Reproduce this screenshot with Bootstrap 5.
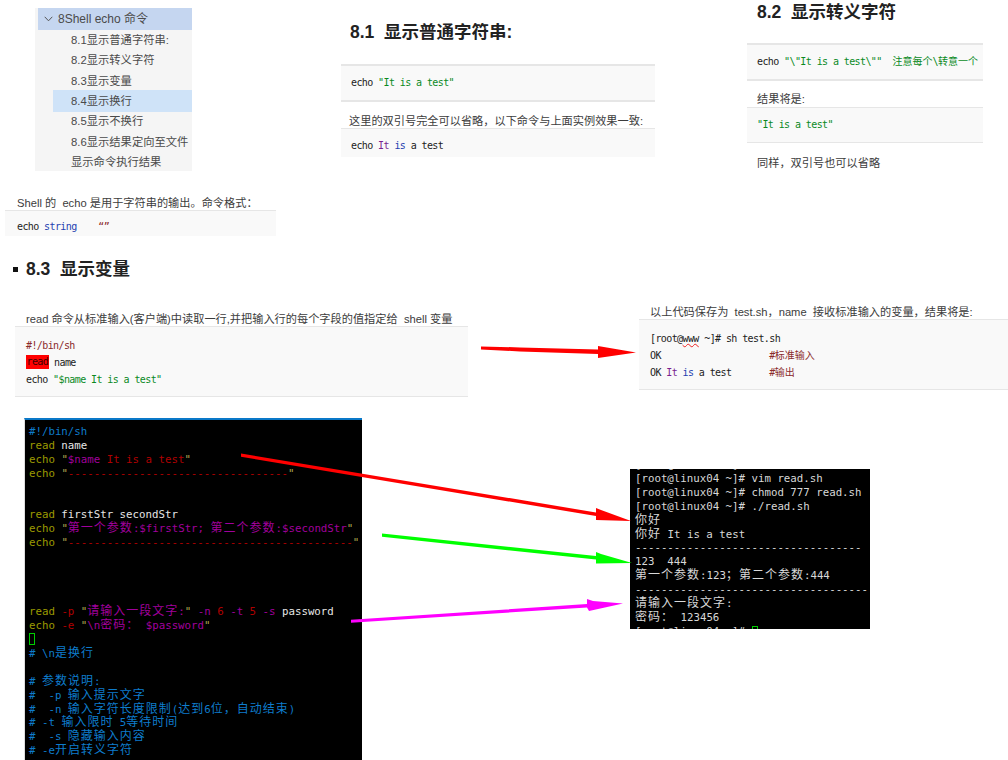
<!DOCTYPE html>
<html lang="zh-CN">
<head>
<meta charset="utf-8">
<title>Shell echo 命令</title>
<link rel="stylesheet" href="https://cdn.jsdelivr.net/npm/bootstrap@5.3.0/dist/css/bootstrap.min.css">
<style>
html,body{margin:0;background:#fff;}
.sheet{position:relative;width:1008px;height:760px;overflow:hidden;font-family:"Liberation Sans","Noto Sans CJK SC",sans-serif;color:#333;}
.scrap{position:absolute;}
.overlay{position:absolute;left:0;top:0;width:1008px;height:760px;pointer-events:none;}

/* placement of each pasted fragment on the canvas */
.at-tree{left:35px;top:8px;width:157px;height:163px;}
.at-intro{left:5px;top:194px;width:271px;}
.at-s81{left:341px;top:20px;width:314px;}
.at-s82{left:747px;top:0;width:236px;}
.at-s83{left:13px;top:257px;}
.at-read{left:15px;top:311px;width:453px;}
.at-result{left:639px;top:304px;width:369px;}
.at-vim{left:24px;top:418px;width:338px;height:342px;}
.at-term{left:630px;top:469px;width:240px;height:160px;}

/* tree */
.tree{background:#f5f5f5;font-size:11.3px;color:#4a4a4a;line-height:20.4px;}
.tree-head{margin-left:3px;height:22px;background:#c5d6f0;padding-left:6px;gap:5px;font-size:12px;line-height:23px;}
.tree-item{height:20.4px;padding-left:36px;white-space:nowrap;}
.tree-item.is-on{background:#cfe3f8;margin-left:18px;padding-left:18px;height:22px;line-height:22px;margin-top:-1px;margin-bottom:-1px;}

/* article */
.para{font-size:11.2px;line-height:16px;margin:0;color:#3c3c3c;white-space:nowrap;}
.title{font-size:17.5px;line-height:24px;font-weight:700;color:#222;margin:0;white-space:nowrap;}
.codebox{font-family:"DejaVu Sans Mono","Noto Sans CJK SC",monospace;font-size:10px;letter-spacing:-.6px;background:#f9f9f9;border-top:1px solid #e6e6e6;border-bottom:1px solid #e6e6e6;color:#222;margin:0;white-space:pre;overflow:hidden;}
.zc{font-family:"Noto Sans CJK SC",sans-serif;letter-spacing:0;line-height:0;}
.box-thick{border-top-width:2px;border-bottom-width:2px;}
.box-open{border-bottom:0;}
.c-green{color:#0a8a1e;}
.c-blue{color:#1f3fb0;}
.c-purple{color:#7a1f8f;}
.c-brown{color:#8a2a2a;}
.hl-red{background:#f00;color:#3a0000;display:inline-block;height:14px;line-height:14px;padding:0 .5px;vertical-align:top;margin-top:1px;}
.squig{text-decoration:underline wavy #e22;text-decoration-thickness:1px;}
.bullet-sq{width:5px;height:5px;background:#111;}

/* terminals */
.vim,.term{background:#000;font-family:"DejaVu Sans Mono","Noto Sans CJK SC",monospace;font-size:10.75px;line-height:13.88px;white-space:pre;overflow:hidden;margin:0;}
.vim{border-top:2px solid #0a78c8;border-left:1px solid #ddd;padding:5px 0 0 4px;color:#e6e6e6;}
.term{color:#d8d8d8;padding:3px 0 0 5px;}
.term-cut{display:block;margin-top:-13.88px;}
.zh{font-family:"Noto Sans CJK SC",sans-serif;font-size:12px;letter-spacing:1px;line-height:0;}
.v-c{color:#0e7ccc;}
.v-k{color:#9c9a00;}
.v-s{color:#a0009c;}
.v-r{color:#b00000;}
.v-q{color:#b0a850;}
.v-cursor{display:inline-block;width:6px;height:12px;border:1px solid #0c0;vertical-align:-2px;}
.t-cursor{display:inline-block;width:6px;height:11px;border:1px solid #0c0;vertical-align:-2px;}

/* spacing inside fragments */
.intro-p{padding-left:12px;padding-top:1px;margin-bottom:-1px;}
.intro-code{height:26px;padding:9px 0 0 12px;line-height:14px;}
.s81-title{padding-left:9px;}
.s81-a{margin-top:20px;height:38px;padding:10px 10px 0;line-height:14px;}
.s81-p{margin-top:11px;margin-bottom:-1px;padding-left:8px;}
.s81-b{height:29px;padding:10px 10px 0;line-height:14px;}
.s82-title{padding-left:10px;}
.s82-a{margin-top:19px;height:38px;padding:10px 10px 0;line-height:14px;}
.s82-p{margin-top:10px;padding-left:10px;}
.s82-b{height:36px;padding:10px 10px 0;line-height:14px;}
.s82-q{margin-top:12px;padding-left:10px;}
.s83-row{gap:8px;}
.read-p,.result-p{padding-left:11px;margin-bottom:-1px;}
.read-code,.result-code{height:71px;padding:10px 11px 0;line-height:17px;}
</style>
</head>
<body>
<div class="sheet">

  <div class="scrap at-tree tree">
    <div class="tree-head d-flex align-items-center">
      <svg width="9" height="6" viewBox="0 0 9 6"><path d="M.7.8 4.5 4.8 8.3.8" fill="none" stroke="#555" stroke-width="1"/></svg>
      <span>8Shell echo 命令</span>
    </div>
    <div class="tree-item">8.1显示普通字符串:</div>
    <div class="tree-item">8.2显示转义字符</div>
    <div class="tree-item">8.3显示变量</div>
    <div class="tree-item is-on">8.4显示换行</div>
    <div class="tree-item">8.5显示不换行</div>
    <div class="tree-item">8.6显示结果定向至文件</div>
    <div class="tree-item">显示命令执行结果</div>
  </div>

  <div class="scrap at-intro">
    <p class="para intro-p">Shell 的&nbsp; echo 是用于字符串的输出。命令格式&#65306;</p>
    <pre class="codebox box-open intro-code">echo <span class="c-blue">string</span>    <span class="c-brown">“”</span></pre>
  </div>

  <div class="scrap at-s81">
    <h2 class="title s81-title">8.1&nbsp; 显示普通字符串:</h2>
    <pre class="codebox box-thick s81-a">echo <span class="c-green">"It is a test"</span></pre>
    <p class="para s81-p">这里的双引号完全可以省略&#65292;以下命令与上面实例效果一致:</p>
    <pre class="codebox box-open s81-b">echo <span class="c-purple">It</span> <span class="c-blue">is</span> a test</pre>
  </div>

  <div class="scrap at-s82">
    <h2 class="title s82-title">8.2&nbsp; 显示转义字符</h2>
    <pre class="codebox box-thick s82-a">echo <span class="c-green">"\"It is a test\""  <span class="zc">注意每个</span>\<span class="zc">转意一个</span></span></pre>
    <p class="para s82-p">结果将是:</p>
    <pre class="codebox s82-b"><span class="c-green">"It is a test"</span></pre>
    <p class="para s82-q">同样&#65292;双引号也可以省略</p>
  </div>

  <div class="scrap at-s83 d-flex align-items-center s83-row">
    <span class="bullet-sq"></span>
    <h2 class="title">8.3&nbsp; 显示变量</h2>
  </div>

  <div class="scrap at-read">
    <p class="para read-p">read 命令从标准输入(客户端)中读取一行,并把输入行的每个字段的值指定给&nbsp; shell 变量</p>
    <pre class="codebox read-code"><span class="c-brown">#!/bin/sh</span>
<span class="hl-red">read</span> name
echo <span class="c-green">"$name It is a test"</span></pre>
  </div>

  <div class="scrap at-result">
    <p class="para result-p">以上代码保存为&nbsp; test.sh&#65292;name&nbsp; 接收标准输入的变量&#65292;结果将是:</p>
    <pre class="codebox result-code">[root@<span class="squig">www</span> ~]# sh test.sh
OK                    <span class="c-brown">#<span class="zc">标准输入</span></span>
OK <span class="c-purple">It</span> <span class="c-blue">is</span> a test       <span class="c-brown">#<span class="zc">输出</span></span></pre>
  </div>

  <pre class="scrap at-vim vim"><span class="v-c">#!/bin/sh</span>
<span class="v-k">read</span> name
<span class="v-k">echo</span> <span class="v-q">"</span><span class="v-s">$name</span><span class="v-r"> It is a test</span><span class="v-q">"</span>
<span class="v-k">echo</span> <span class="v-q">"</span><span class="v-r">----------------------------------</span><span class="v-q">"</span>


<span class="v-k">read</span> firstStr secondStr
<span class="v-k">echo</span> <span class="v-q">"</span><span class="v-s"><span class="zh">第一个参数</span>:$firstStr; <span class="zh">第二个参数</span>:$secondStr</span><span class="v-q">"</span>
<span class="v-k">echo</span> <span class="v-q">"</span><span class="v-r">--------------------------------------------</span><span class="v-q">"</span>




<span class="v-k">read</span> <span class="v-r">-p</span> <span class="v-q">"</span><span class="v-s"><span class="zh">请输入一段文字</span>:</span><span class="v-q">"</span> <span class="v-s">-n</span> <span class="v-r">6</span> <span class="v-s">-t</span> <span class="v-r">5</span> <span class="v-s">-s</span> password
<span class="v-k">echo</span> <span class="v-r">-e</span> <span class="v-q">"</span><span class="v-s">\n<span class="zh">密码&#65306;</span> $password</span><span class="v-q">"</span>
<span class="v-cursor"></span>
<span class="v-c"># \n<span class="zh">是换行</span></span>

<span class="v-c"># <span class="zh">参数说明</span>:</span>
<span class="v-c">#  -p <span class="zh">输入提示文字</span></span>
<span class="v-c">#  -n <span class="zh">输入字符长度限制</span>(<span class="zh">达到</span>6<span class="zh">位&#65292;自动结束</span>)</span>
<span class="v-c"># -t <span class="zh">输入限时</span> 5<span class="zh">等待时间</span></span>
<span class="v-c">#  -s <span class="zh">隐藏输入内容</span></span>
<span class="v-c"># -e<span class="zh">开启转义字符</span></span></pre>

  <pre class="scrap at-term term"><span class="term-cut">[root@linux04 ~]# </span>[root@linux04 ~]# vim read.sh
[root@linux04 ~]# chmod 777 read.sh
[root@linux04 ~]# ./read.sh
<span class="zh">你好</span>
<span class="zh">你好</span> It is a test
-----------------------------------
123  444
<span class="zh">第一个参数</span>:123<span class="zh">&#65307;</span><span class="zh">第二个参数</span>:444
------------------------------------
<span class="zh">请输入一段文字</span>:
<span class="zh">密码&#65306;</span> 123456
[root@linux04 ~]# <span class="t-cursor"></span></pre>

  <svg class="overlay" viewBox="0 0 1008 760" aria-hidden="true">
    <g fill="#f00">
      <polygon points="481,346.5 520,347.4 598,349.5 598,346 636,352.5 598,358 598,354 520,351.4 481,349.5"/>
      <polygon points="241,453.5 241,456.8 596,516 596,520 631,521 601,510 596,508 596,512.5"/>
    </g>
    <polygon fill="#0f0" points="382,533.5 382,536.8 596,559.5 596,563.5 632,563 601,554 596,552 596,556"/>
    <polygon fill="#f0f" points="351,619.8 351,622.8 587,607.5 589,611 623,603.5 593,601 587,599 587,604"/>
  </svg>
</div>
<script src="https://cdn.jsdelivr.net/npm/bootstrap@5.3.0/dist/js/bootstrap.bundle.min.js"></script>
</body>
</html>
